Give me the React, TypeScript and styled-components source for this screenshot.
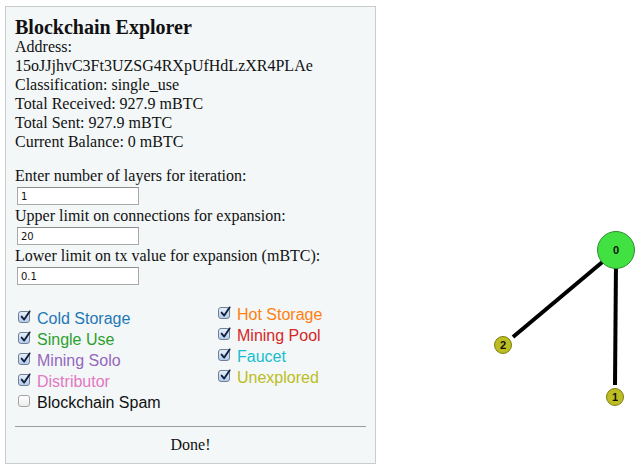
import React from "react";
import styled, { createGlobalStyle } from "styled-components";

const GlobalStyle = createGlobalStyle`
	html, body {
		margin: 0;
		padding: 0;
		background: #ffffff;
	}
	body {
		font-family: "Liberation Serif", "Times New Roman", serif;
		font-size: 16px;
		color: #111111;
	}
`;

const categories = [
	[
		{ label: "Cold Storage", color: "#1f77b4", checked: true },
		{ label: "Single Use", color: "#2ca02c", checked: true },
		{ label: "Mining Solo", color: "#9467bd", checked: true },
		{ label: "Distributor", color: "#e377c2", checked: true },
		{ label: "Blockchain Spam", color: "#111111", checked: false },
	],
	[
		{ label: "Hot Storage", color: "#ff7f0e", checked: true },
		{ label: "Mining Pool", color: "#d62728", checked: true },
		{ label: "Faucet", color: "#17becf", checked: true },
		{ label: "Unexplored", color: "#bcbd22", checked: true },
	],
];

const fields = [
	{ label: "Enter number of layers for iteration:", value: "1" },
	{ label: "Upper limit on connections for expansion:", value: "20" },
	{ label: "Lower limit on tx value for expansion (mBTC):", value: "0.1" },
];

const info = [
	"Address:",
	"15oJJjhvC3Ft3UZSG4RXpUfHdLzXR4PLAe",
	"Classification: single_use",
	"Total Received: 927.9 mBTC",
	"Total Sent: 927.9 mBTC",
	"Current Balance: 0 mBTC",
];

const nodes = [
	{ id: "0", x: 616, y: 250, r: 18.5, fill: "#41e141", stroke: "#2f8f2f", size: 11 },
	{ id: "1", x: 615, y: 397, r: 8.5, fill: "#bcbd22", stroke: "#7d7e10", size: 11 },
	{ id: "2", x: 503, y: 345, r: 8.5, fill: "#bcbd22", stroke: "#7d7e10", size: 11 },
];

const links = [
	{ x1: 606, y1: 259, x2: 513, y2: 337 },
	{ x1: 616, y1: 262, x2: 615, y2: 385 },
];

const CheckBox = ({ checked }: { checked: boolean }) => (
	<Box $checked={checked}>
		<HiddenInput type="checkbox" checked={checked} readOnly />
		{checked && (
			<svg width="13" height="13" viewBox="0 0 13 13">
				<path
					d="M2.6 6.6 L5.2 9.6 L10.6 1.4"
					fill="none"
					stroke="#14213d"
					strokeWidth="1.9"
					strokeLinecap="round"
					strokeLinejoin="round"
				/>
			</svg>
		)}
	</Box>
);

const Graph = () => (
	<Canvas width="265" height="476" viewBox="376 0 265 476">
		{links.map((l, i) => (
			<line key={i} {...l} stroke="#000000" strokeWidth="4" />
		))}
		{nodes.map((n) => (
			<g key={n.id}>
				<circle cx={n.x} cy={n.y} r={n.r} fill={n.fill} stroke={n.stroke} strokeWidth="1" />
				<NodeLabel x={n.x} y={n.y + n.size * 0.36} $size={n.size} textAnchor="middle">
					{n.id}
				</NodeLabel>
			</g>
		))}
	</Canvas>
);

const App = () => {
	return (
		<>
			<GlobalStyle />
			<Page>
				<Panel>
					<Title>Blockchain Explorer</Title>
					<Info>
						{info.map((line) => (
							<Line key={line}>{line}</Line>
						))}
					</Info>
					<Form>
						{fields.map((f) => (
							<div key={f.label}>
								<Line>{f.label}</Line>
								<InputRow>
									<TextInput type="text" defaultValue={f.value} />
								</InputRow>
							</div>
						))}
					</Form>
					<Legend>
						{categories.map((col, ci) => (
							<Column key={ci} $shift={ci === 1}>
								{col.map((c) => (
									<Option key={c.label} $color={c.color}>
										<CheckBox checked={c.checked} />
										{c.label}
									</Option>
								))}
							</Column>
						))}
					</Legend>
					<Divider />
					<Done>Done!</Done>
				</Panel>
				<Graph />
			</Page>
		</>
	);
};

export default App;

const Page = styled.div`
	display: flex;
	align-items: flex-start;
	padding: 6px 0 0 5px;
	width: 641px;
	height: 476px;
	box-sizing: border-box;
	overflow: hidden;
`;

const Panel = styled.div`
	box-sizing: border-box;
	width: 371px;
	padding: 10px 9px 9px;
	background: #f3f7f8;
	border: 1px solid #c9cccd;
	flex-shrink: 0;
`;

const Title = styled.h1`
	margin: 0;
	font-size: 20px;
	line-height: 20px;
	font-weight: 700;
`;

const Info = styled.div`
	display: flex;
	flex-direction: column;
`;

const Line = styled.div`
	line-height: 19px;
	white-space: nowrap;
`;

const Form = styled.div`
	margin-top: 15px;
`;

const InputRow = styled.div`
	box-sizing: border-box;
	height: 21px;
	padding: 2px 0 0 2px;
`;

const TextInput = styled.input`
	display: block;
	box-sizing: border-box;
	width: 122px;
	height: 18px;
	margin: 0;
	padding: 1px 3px 0;
	border: 1px solid #a9a9a9;
	border-top-color: #8e8e8e;
	background: #ffffff;
	font-family: "DejaVu Sans", "Liberation Sans", sans-serif;
	font-size: 10px;
	color: #111111;
	outline: none;
`;

const Legend = styled.div`
	display: grid;
	grid-template-columns: 200px 151px;
	align-items: start;
	margin-top: 22px;
`;

const Column = styled.div<{ $shift?: boolean }>`
	display: flex;
	flex-direction: column;
	margin-top: ${({ $shift }) => ($shift ? "-4px" : "0")};
`;

const Option = styled.label<{ $color: string }>`
	display: flex;
	align-items: center;
	height: 21px;
	padding-left: 3px;
	font-family: "Liberation Sans", Arial, sans-serif;
	font-size: 16px;
	color: ${({ $color }) => $color};
	white-space: nowrap;
`;

const Box = styled.span<{ $checked: boolean }>`
	position: relative;
	display: inline-flex;
	align-items: center;
	justify-content: center;
	box-sizing: border-box;
	width: 12px;
	height: 12px;
	margin: -3px 7px 0 0;
	border: 1px solid ${({ $checked }) => ($checked ? "#6f7f96" : "#a4a4a4")};
	border-radius: 3px;
	background: ${({ $checked }) =>
		$checked
			? "linear-gradient(#e6effa, #b4cdec)"
			: "linear-gradient(#ffffff, #ececec)"};

	svg {
		position: absolute;
		left: 0;
		top: -2px;
	}
`;

const HiddenInput = styled.input`
	position: absolute;
	opacity: 0;
	width: 0;
	height: 0;
	margin: 0;
`;

const Divider = styled.hr`
	margin: 13px 0 0;
	border: none;
	border-top: 1px solid #9c9c9c;
	height: 0;
`;

const Done = styled.div`
	margin-top: 8px;
	line-height: 19px;
	text-align: center;
`;

const Canvas = styled.svg`
	display: block;
	margin-top: -6px;
	flex-shrink: 0;
`;

const NodeLabel = styled.text<{ $size: number }>`
	font-family: "Liberation Sans", Arial, sans-serif;
	font-weight: 700;
	font-size: ${({ $size }) => `${$size}px`};
	fill: #111111;
`;
